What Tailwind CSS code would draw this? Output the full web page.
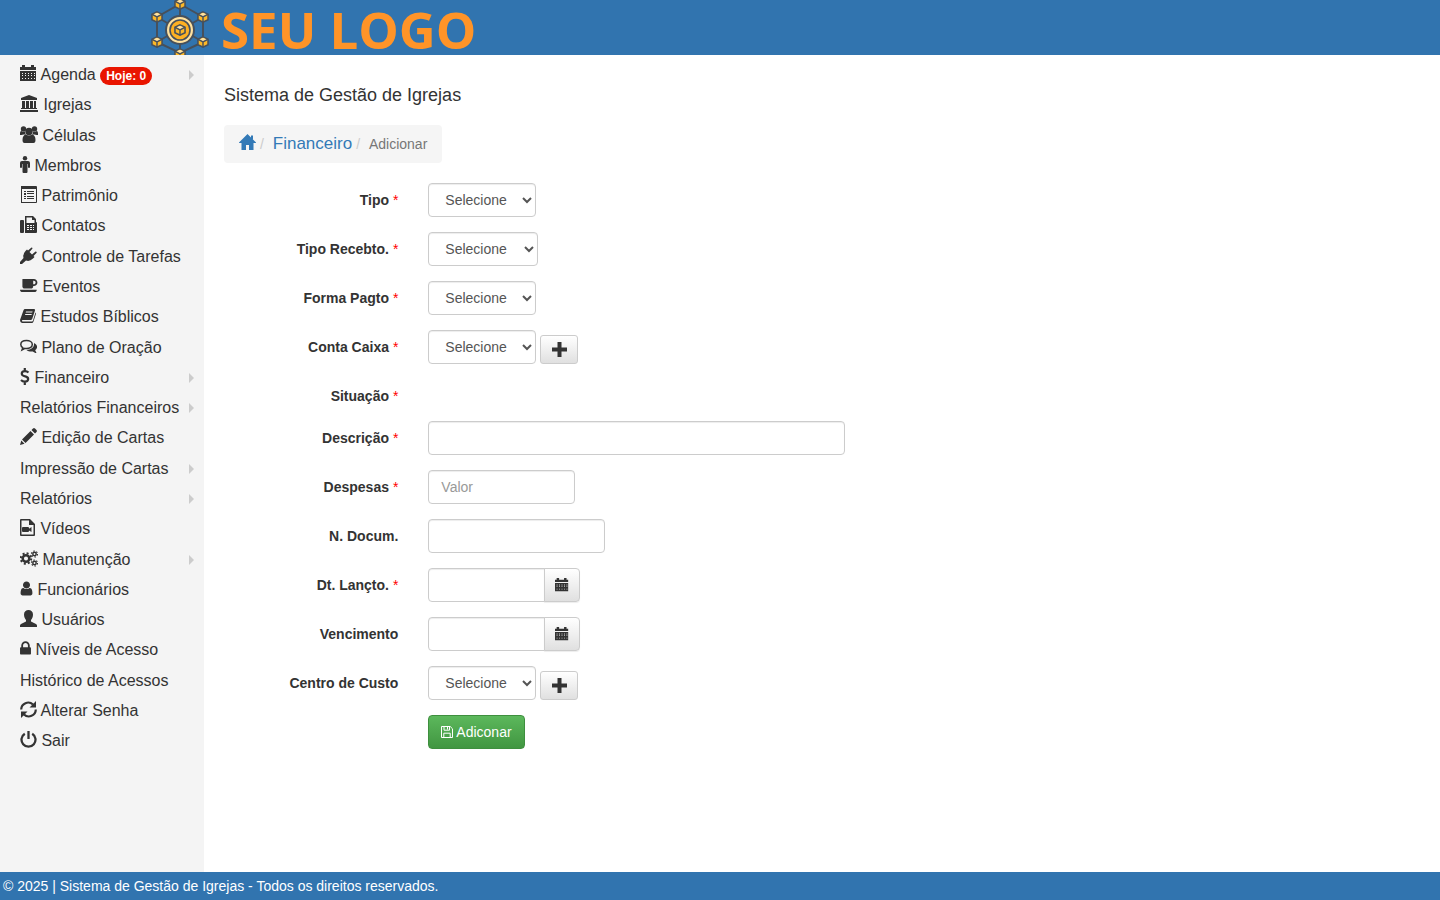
<!DOCTYPE html>
<html lang="pt-BR">
<head>
    <meta charset="UTF-8">
    <meta name="viewport" content="width=device-width, initial-scale=1.0">
    <title>Sistema de Gestão de Igrejas</title>
    <script src="https://cdn.jsdelivr.net/npm/@tailwindcss/browser@4"></script>
</head>
<body class="min-h-screen flex flex-col bg-white text-[#333] text-sm font-['Liberation_Sans',Arial,sans-serif]">
    <!-- Icons -->
    <svg class="hidden" aria-hidden="true">
        <symbol id="calendar" viewBox="0 0 17 17"><path fill-rule="evenodd" d="M0 2h2V0h3v2h6V0h3v2h2v3H0zM0 6h16v10H0zM2 8v1h1V8zm3 0v1h1V8zm3 0v1h1V8zm3 0v1h1V8zm3 0v1h1V8zM2 10v1h1v-1zm3 0v1h1v-1zm3 0v1h1v-1zm3 0v1h1v-1zm3 0v1h1v-1zM2 13v1h1v-1zm3 0v1h1v-1zm3 0v1h1v-1zm3 0v1h1v-1zm3 0v1h1v-1z"/></symbol>
        <symbol id="bank" viewBox="0 0 19 17"><path d="M9 0l8 3v2H1V3zM2 6h3v7h1V6h3v7h1V6h3v7h1V6h2v7h1v1H1v-1h1zM0 15h18v2H0z"/></symbol>
        <symbol id="users" viewBox="0 0 18 17"><circle cx="3.5" cy="3" r="2.7"/><circle cx="14.5" cy="3" r="2.7"/><circle cx="9" cy="5.5" r="3.7"/><path d="M0 9V7q0-2 1.500-2Q3 6.500 5 5.500q0 2 .8 3H4Q2 8.500 1.500 9zM18 9V7q0-2-1.500-2-1.500 1.500-3.500.5 0 2-.8 3H14q2 0 2.500.5zM2.500 14q0-5 3.500-5.500Q9 10.500 12 8.500q3.500.5 3.500 5.500 0 3-2 3h-9q-2 0-2-3z"/></symbol>
        <symbol id="male" viewBox="0 0 10 17"><circle cx="5" cy="2.200" r="2.200"/><path d="M2 5h6q2 0 2 2v4q0 1-1 1t-1-1V8H7.500v7.800Q7.500 17 6.500 17h-3q-1 0-1-1.200V8H2v3q0 1-1 1t-1-1V7q0-2 2-2z"/></symbol>
        <symbol id="list" viewBox="0 0 17 17"><path fill-rule="evenodd" d="M1 0h15q1 0 1 1v15q0 1-1 1H1zm1 3v13h14V3zM4 5h2v1H4zm3 0h7v1H7zM4 7h2v2H4zm3 0h7v1H7zM4 10h2v1H4zm3 0h7v1H7zM4 12h2v1H4zm3 0h7v1H7z"/></symbol>
        <symbol id="fax" viewBox="0 0 17 17"><path fill-rule="evenodd" d="M0 5q0-1 1-1h2q1 0 1 1v11q0 1-1 1H1q-1 0-1-1zM5 0h8l3 3v3q1 0 1 1v9q0 1-1 1H5zm1.500 1.500V7h8V4H12V1.500zM7 9v1h2V9zm3 0v1h2V9zm3 0v1h1V9zm-6 2v1h2v-1zm3 0v1h2v-1zm3 0v1h1v-1zm-6 2v1h2v-1zm3 0v1h2v-1zm3 0v1h1v-1z"/></symbol>
        <symbol id="plug" viewBox="0 0 17 17"><path d="M11.500.5q1 0 1 1L9.500 5 12 7.500l3.500-3q1.500 0 1.200 1.300L13.500 9l1 1-1.500 1.500q-3.500 3.500-7 2L2 17H0v-2l3.500-4Q2.500 7 5.500 4L7 2.500l1 1z"/></symbol>
        <symbol id="coffee" viewBox="0 0 1920 1792"><path d="M1664 576q0-80-56-136t-136-56h-64v384h64q80 0 136-56t56-136zm-1664 768h1792q0 106-75 181t-181 75h-1280q-106 0-181-75t-75-181zm1856-768q0 159-112.500 271.500t-271.500 112.500h-64v32q0 92-66 158t-158 66h-704q-92 0-158-66t-66-158v-736q0-26 19-45t45-19h1152q159 0 271.500 112.500t112.500 271.500z"/></symbol>
        <symbol id="book" viewBox="0 0 16 17"><path fill-rule="evenodd" d="M5 2h9q1.300.2 1 1.500L12.200 12q-.5 1-1.500 1H2.500q-1 .5 0 1.500H12q.7-.2 1-1l2.500-8q.7.500.4 1.500L13.500 14.500Q13 16 11.700 16H2Q0 15.500 0 13L3.500 3.200Q4 2 5 2zm1 2.500L5.700 5.500h6.500l.4-1zM5.300 7 5 8h6.500l.3-1z"/></symbol>
        <symbol id="comments" viewBox="0 0 17 17"><path fill="none" stroke="currentColor" stroke-width="1.500" d="M6.500 2.500c-3.500 0-5.700 1.700-5.700 4 0 1.500.9 2.500 2 3.200L2 12l3-1.600c4.500.6 7.300-1.300 7.300-3.900 0-2.300-2.500-4-5.800-4z"/><path d="M14 5c4 2 3.800 5.500 1.200 7.200L16.500 15c-1.500 0-2.700-.6-3.700-1.500-2.600.3-4.800-.2-6.300-1.500C11 12 14.500 9.500 14 5z"/></symbol>
        <symbol id="dollar" viewBox="0 0 10 17"><path fill="none" stroke="currentColor" stroke-width="2.200" d="M8.500 4.500Q7 3.200 5 3.200C1 3.200.8 7 4 8l2 .6c3.200 1 2.800 5-1.200 5Q2.500 13.500 1 12M4.800 0v3M4.800 14v3"/></symbol>
        <symbol id="pencil" viewBox="0 0 17 17"><path d="M13 .5q1-.8 2 0l1.500 1.500q.8 1 0 2L15 5.500 11.500 2zM10.500 3 14 6.500 5.500 15 2 11.500zM1.300 12.500 4.500 15.700 0 17z"/></symbol>
        <symbol id="video" viewBox="0 0 16 17"><path fill-rule="evenodd" d="M1 0h9l5 5v11q0 1-1 1H1q-1 0-1-1V1q0-1 1-1zm.5 1.500v14h12V6H9V1.500zM3 8h5q1 0 1 1v.7L11.500 8v5L9 11.500v.5q0 1-1 1H3q-1 0-1-1V9q0-1 1-1z"/></symbol>
        <symbol id="cogs" viewBox="0 0 18 17"><g fill="none" stroke="currentColor"><circle cx="6" cy="8.500" r="3.300" stroke-width="2.500"/><circle cx="6" cy="8.500" r="5.200" stroke-width="2" stroke-dasharray="2 2.080"/><circle cx="14.500" cy="4" r="1.700" stroke-width="1.500"/><circle cx="14.500" cy="4" r="3" stroke-width="1.200" stroke-dasharray="1.500 1.640"/><circle cx="14.500" cy="13" r="1.700" stroke-width="1.500"/><circle cx="14.500" cy="13" r="3" stroke-width="1.200" stroke-dasharray="1.500 1.640"/></g></symbol>
        <symbol id="user" viewBox="192 0 1408 1792"><path d="M1536 1399q0 109-62.500 187t-150.500 78h-854q-88 0-150.500-78t-62.500-187q0-85 8.500-160.500t31.500-152 58.500-131 94-89 134.500-34.500q131 128 313 128t313-128q76 0 134.500 34.500t94 89 58.500 131 31.500 152 8.500 160.500zm-256-887q0 159-112.500 271.500t-271.500 112.500-271.500-112.500-112.500-271.500 112.500-271.500 271.500-112.500 271.500 112.500 112.500 271.500z"/></symbol>
        <symbol id="person" viewBox="0 0 17 17"><path d="M8.500 0C11 0 13 1.500 13 4.500c0 2.500-1 4.500-2 5.500v1.500l5 2.500q1 .5 1 1.500V17H0v-1.500q0-1 1-1.500l5-2.500V10C5 9 4 7 4 4.500 4 1.500 6 0 8.500 0z"/></symbol>
        <symbol id="lock" viewBox="320 0 1152 1792"><path d="M640 768h512v-192q0-106-75-181t-181-75-181 75-75 181v192zm832 96v576q0 40-28 68t-68 28h-960q-40 0-68-28t-28-68v-576q0-40 28-68t68-28h32v-192q0-184 132-316t316-132 316 132 132 316v192h32q40 0 68 28t28 68z"/></symbol>
        <symbol id="refresh" viewBox="0 0 17 17"><path fill="none" stroke="currentColor" stroke-width="2.200" d="M1.200 8.500A7 7 0 0 1 13 3.500M15.800 8.500A7 7 0 0 1 4 13.500"/><path d="M16 0v6.500H9.500zM1 17v-6.500h6.500z"/></symbol>
        <symbol id="power" viewBox="0 0 17 17"><path fill="none" stroke="currentColor" stroke-width="2.300" d="M4.800 2.700a7 7 0 1 0 7.400 0M8.500 0v8"/></symbol>
        <symbol id="home" viewBox="0 0 17 17"><path d="M8.500 0 17 8.500V9h-2.500v7H10v-5H7v5H2.500V9H0v-.5L3 5.500z"/><path d="M12 1.500h2v4h-2z"/></symbol>
        <symbol id="plus" viewBox="0 0 15 15"><path d="M5.500 0h4v5.500H15v4H9.500V15h-4V9.500H0v-4h5.500z"/></symbol>
        <symbol id="save" viewBox="0 0 12 12"><path fill="none" stroke="currentColor" d="M.5.5h8.700l2.300 2.300v8.700H.5zM3 .5v3.700h5.500V.5M2.800 11.500V7.200h6.400v4.300M6.500 1v2.500"/></symbol>
        <symbol id="cube" viewBox="0 0 10 10"><path fill="#fdb827" stroke="#46505c" stroke-width="1.300" d="M5 .7 9.200 2.700v4.600L5 9.300.8 7.300V2.700z"/><path fill="#ffe2a0" d="M5 1.400 8.200 3 5 4.600 1.800 3z"/><path fill="none" stroke="#46505c" stroke-width="1.200" d="M1 2.900 5 5l4-2.100M5 5v4.300"/></symbol>
    </svg>

    <header class="h-[55px] bg-[#3174af]">
        <a href="#" class="ml-[151px] flex h-full w-max items-start gap-3">
            <svg class="w-[58px] h-[55px]" viewBox="0 0 58 55" aria-hidden="true">
                <path fill="none" stroke="#46505c" stroke-width="2" d="M29 4 52 17v25L29 53 6 42V17zM29 6v10M29 42v10M6 17l12 7M52 17l-12 7M6 42l12-7M52 42l-12-7"/>
                <circle cx="29" cy="30" r="14" fill="#ffe2a0" stroke="#46505c" stroke-width="2"/>
                <circle cx="29" cy="30" r="10" fill="#fdb022" stroke="#46505c" stroke-width="1.600"/>
                <use href="#cube" x="23" y="24" width="12" height="12"/>
                <use href="#cube" x="23" y="-2" width="12" height="12"/>
                <use href="#cube" x="0" y="11" width="12" height="12"/>
                <use href="#cube" x="46" y="11" width="12" height="12"/>
                <use href="#cube" x="0" y="36" width="12" height="12"/>
                <use href="#cube" x="46" y="36" width="12" height="12"/>
                <use href="#cube" x="23" y="48" width="12" height="12"/>
            </svg>
            <span class="font-['Open_Sans',sans-serif] text-[51px] leading-[58px] font-bold text-[#ff9428]">SEU LOGO</span>
        </a>
    </header>

    <div class="flex flex-1">
        <nav class="w-[204px] shrink-0 bg-[#f4f4f4] pt-[5px]">
            <ul class="text-base leading-[1.518] [&_a]:flex [&_a]:items-center [&_a]:py-[3px] [&_a]:pl-5 [&_a]:pr-[10px] [&_a]:whitespace-nowrap [&_svg]:inline [&_svg]:h-[17px] [&_svg]:align-[-2px] [&_svg]:fill-current [&_i]:ml-auto [&_i]:border-y-[5px] [&_i]:border-l-[5px] [&_i]:border-y-transparent [&_i]:border-l-[#ccc]">
                <li><a href="#"><span><svg class="w-[17px]"><use href="#calendar"/></svg> Agenda <span class="inline-block rounded-full bg-[#e91500] px-1.5 text-xs leading-[18px] font-bold text-white">Hoje: 0</span></span><i></i></a></li>
                <li><a href="#"><span><svg class="w-[19px]"><use href="#bank"/></svg> Igrejas</span></a></li>
                <li><a href="#"><span><svg class="w-[18px]"><use href="#users"/></svg> Células</span></a></li>
                <li><a href="#"><span><svg class="w-[10px]"><use href="#male"/></svg> Membros</span></a></li>
                <li><a href="#"><span><svg class="w-[17px]"><use href="#list"/></svg> Patrimônio</span></a></li>
                <li><a href="#"><span><svg class="w-[17px]"><use href="#fax"/></svg> Contatos</span></a></li>
                <li><a href="#"><span><svg class="w-[17px]"><use href="#plug"/></svg> Controle de Tarefas</span></a></li>
                <li><a href="#"><span><svg class="w-[18px]"><use href="#coffee"/></svg> Eventos</span></a></li>
                <li><a href="#"><span><svg class="w-[16px]"><use href="#book"/></svg> Estudos Bíblicos</span></a></li>
                <li><a href="#"><span><svg class="w-[17px]"><use href="#comments"/></svg> Plano de Oração</span></a></li>
                <li><a href="#"><span><svg class="w-[10px]"><use href="#dollar"/></svg> Financeiro</span><i></i></a></li>
                <li><a href="#"><span>Relatórios Financeiros</span><i></i></a></li>
                <li><a href="#"><span><svg class="w-[17px]"><use href="#pencil"/></svg> Edição de Cartas</span></a></li>
                <li><a href="#"><span>Impressão de Cartas</span><i></i></a></li>
                <li><a href="#"><span>Relatórios</span><i></i></a></li>
                <li><a href="#"><span><svg class="w-[16px]"><use href="#video"/></svg> Vídeos</span></a></li>
                <li><a href="#"><span><svg class="w-[18px]"><use href="#cogs"/></svg> Manutenção</span><i></i></a></li>
                <li><a href="#"><span><svg class="w-[13px]"><use href="#user"/></svg> Funcionários</span></a></li>
                <li><a href="#"><span><svg class="w-[17px]"><use href="#person"/></svg> Usuários</span></a></li>
                <li><a href="#"><span><svg class="w-[11px]"><use href="#lock"/></svg> Níveis de Acesso</span></a></li>
                <li><a href="#"><span>Histórico de Acessos</span></a></li>
                <li><a href="#"><span><svg class="w-[17px]"><use href="#refresh"/></svg> Alterar Senha</span></a></li>
                <li><a href="#"><span><svg class="w-[17px]"><use href="#power"/></svg> Sair</span></a></li>
            </ul>
        </nav>

        <main class="flex-1 min-w-0 px-5 pt-[30px]">
            <h1 class="text-lg leading-5 font-medium">Sistema de Gestão de Igrejas</h1>
            <ol class="mt-5 mb-5 flex w-max items-center rounded bg-[#f5f5f5] px-[15px] h-[38px] leading-5">
                <li class="pb-1"><a href="#" aria-label="Início" class="text-[#337ab7]"><svg class="size-[17px] fill-current"><use href="#home"/></svg></a></li>
                <li class="text-[17px] text-[#337ab7]"><span class="pl-1 pr-[5px] text-sm text-[#ccc]">/&nbsp;</span><a href="#">Financeiro</a></li>
                <li class="text-[#777]"><span class="pl-1 pr-[5px] text-[#ccc]">/&nbsp;</span>Adicionar</li>
            </ol>

            <form class="-mx-[15px] flex flex-col gap-[15px] leading-5 [&>div]:flex [&_label]:w-1/6 [&_label]:shrink-0 [&_label]:px-[15px] [&_label]:pt-[7px] [&_label]:text-right [&_label]:font-bold [&_label>span]:font-normal [&_label>span]:text-[red] [&_section]:flex [&_section]:px-[15px] [&_input]:h-[34px] [&_input]:rounded [&_input]:border [&_input]:border-[#ccc] [&_input]:px-3 [&_input]:text-[#555] [&_input]:shadow-[inset_0_1px_1px_rgba(0,0,0,0.075)] [&_select]:h-[34px] [&_select]:rounded [&_select]:border [&_select]:border-[#ccc] [&_select]:bg-white [&_select]:px-3 [&_select]:text-[#555] [&_select]:shadow-[inset_0_1px_1px_rgba(0,0,0,0.075)]">
                <div>
                    <label for="tipo">Tipo <span>*</span></label>
                    <section><select id="tipo" class="w-[108px]"><option>Selecione</option></select></section>
                </div>
                <div>
                    <label for="recebto">Tipo Recebto. <span>*</span></label>
                    <section><select id="recebto" class="w-[110px]"><option>Selecione</option></select></section>
                </div>
                <div>
                    <label for="forma">Forma Pagto <span>*</span></label>
                    <section><select id="forma" class="w-[108px]"><option>Selecione</option></select></section>
                </div>
                <div>
                    <label for="conta">Conta Caixa <span>*</span></label>
                    <section class="items-end gap-1">
                        <select id="conta" class="w-[108px]"><option>Selecione</option></select>
                        <button type="button" aria-label="Adicionar conta" class="grid h-[29px] w-[38px] place-items-center rounded-[3px] border border-[#ccc] bg-linear-to-b from-white to-[#e0e0e0]"><svg class="size-[15px] fill-current"><use href="#plus"/></svg></button>
                    </section>
                </div>
                <div>
                    <label>Situação <span>*</span></label>
                </div>
                <div>
                    <label for="descricao">Descrição <span>*</span></label>
                    <section><input type="text" id="descricao" class="w-[417px]"></section>
                </div>
                <div>
                    <label for="despesas">Despesas <span>*</span></label>
                    <section><input type="text" id="despesas" placeholder="Valor" class="w-[147px] placeholder:text-[#999]"></section>
                </div>
                <div>
                    <label for="docum">N. Docum.</label>
                    <section><input type="text" id="docum" class="w-[177px]"></section>
                </div>
                <div>
                    <label for="lancto">Dt. Lançto. <span>*</span></label>
                    <section>
                        <input type="text" id="lancto" class="w-[117px] rounded-r-none!">
                        <button type="button" aria-label="Abrir calendário" class="-ml-px grid h-[34px] w-9 place-items-center rounded-r border border-[#ccc] bg-linear-to-b from-white to-[#e0e0e0] shadow-[0_1px_1px_rgba(0,0,0,0.075)]"><svg class="size-[14px] fill-current"><use href="#calendar"/></svg></button>
                    </section>
                </div>
                <div>
                    <label for="vencimento">Vencimento</label>
                    <section>
                        <input type="text" id="vencimento" class="w-[117px] rounded-r-none!">
                        <button type="button" aria-label="Abrir calendário" class="-ml-px grid h-[34px] w-9 place-items-center rounded-r border border-[#ccc] bg-linear-to-b from-white to-[#e0e0e0] shadow-[0_1px_1px_rgba(0,0,0,0.075)]"><svg class="size-[14px] fill-current"><use href="#calendar"/></svg></button>
                    </section>
                </div>
                <div>
                    <label for="centro">Centro de Custo</label>
                    <section class="items-end gap-1">
                        <select id="centro" class="w-[108px]"><option>Selecione</option></select>
                        <button type="button" aria-label="Adicionar centro de custo" class="grid h-[29px] w-[38px] place-items-center rounded-[3px] border border-[#ccc] bg-linear-to-b from-white to-[#e0e0e0]"><svg class="size-[15px] fill-current"><use href="#plus"/></svg></button>
                    </section>
                </div>
                <div>
                    <section class="ml-[16.6667%]">
                        <button type="submit" class="flex h-[34px] items-center gap-[3px] rounded border border-[#3e8f3e] bg-linear-to-b from-[#5cb85c] to-[#419641] px-3 text-white"><svg class="size-[12px]"><use href="#save"/></svg>Adiconar</button>
                    </section>
                </div>
            </form>
        </main>
    </div>

    <footer class="h-7 bg-[#3174af] px-[3px] leading-7 text-white">© 2025 | Sistema de Gestão de Igrejas - Todos os direitos reservados.</footer>
</body>
</html>
